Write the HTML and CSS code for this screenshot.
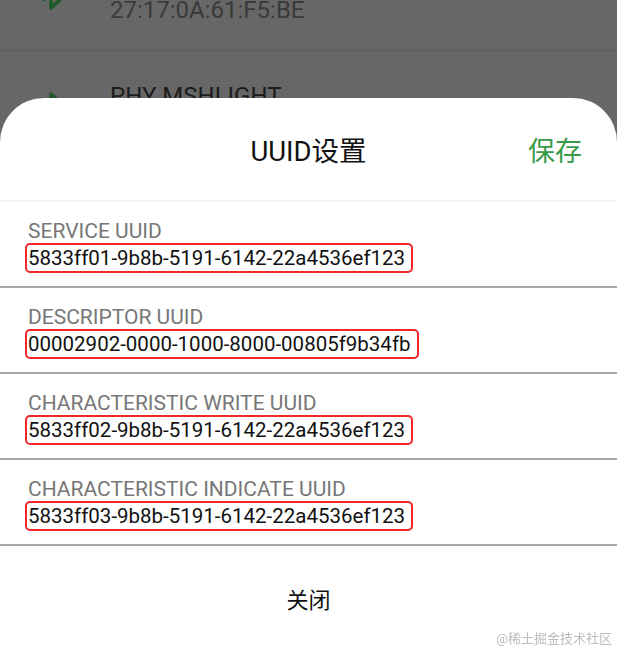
FILE: index.html
```html
<!DOCTYPE html>
<html>
<head>
  <meta charset="utf-8">
  <title>UUID设置</title>
  <link rel="stylesheet" href="styles.css">
</head>
<body>
  <!-- device list behind the sheet -->
  <div class="device-list">
    <div class="device">
      <svg class="bt-icon" viewBox="0 0 24 24"><path d="M6.5 7l11 10-5.5 5V2l5.5 5-11 10"/></svg>
      <div class="device-info">
        <div class="device-name">PHY LIGHT</div>
        <div class="device-mac">27:17:0A:61:F5:BE</div>
      </div>
    </div>
    <div class="device">
      <svg class="bt-icon" viewBox="0 0 24 24"><path d="M6.5 7l11 10-5.5 5V2l5.5 5-11 10"/></svg>
      <div class="device-info">
        <div class="device-name">PHY MSHLIGHT</div>
        <div class="device-mac">27:17:0A:61:F5:C0</div>
      </div>
    </div>
  </div>

  <div class="sheet">
    <div class="sheet-header">
      <span></span>
      <span class="sheet-title">UUID设置</span>
      <button class="save-btn">保存</button>
    </div>
    <div class="uuid-row">
      <div class="uuid-label">SERVICE UUID</div>
      <div class="uuid-value">5833ff01-9b8b-5191-6142-22a4536ef123</div>
    </div>
    <div class="uuid-row">
      <div class="uuid-label">DESCRIPTOR UUID</div>
      <div class="uuid-value">00002902-0000-1000-8000-00805f9b34fb</div>
    </div>
    <div class="uuid-row">
      <div class="uuid-label">CHARACTERISTIC WRITE UUID</div>
      <div class="uuid-value">5833ff02-9b8b-5191-6142-22a4536ef123</div>
    </div>
    <div class="uuid-row">
      <div class="uuid-label">CHARACTERISTIC INDICATE UUID</div>
      <div class="uuid-value">5833ff03-9b8b-5191-6142-22a4536ef123</div>
    </div>
    <button class="close-btn">关闭</button>
  </div>

  <div class="watermark">@稀土掘金技术社区</div>
</body>
</html>
```

FILE: styles.css
```css
/* Bottom sheet for editing the BLE UUIDs */
body {
  margin: 0;
  background-color: #676767;
  font-family: Roboto, "Noto Sans CJK SC", sans-serif;
  overflow: hidden;
}

/* dimmed device list */
.device-list {
  margin-top: -65px;
}

.device {
  display: flex;
  border-bottom: 1px solid #5c5c5c;
}

.bt-icon {
  width: 36px;
  height: 36px;
  margin: 40px 0 0 33px;
  fill: none;
  stroke: #1d5a28;
  stroke-width: 2.4;
  stroke-linejoin: round;
  flex-shrink: 0;
}

.device-info {
  padding: 30px 0 25px 41px;
  font-size: 24px;
  line-height: 30px;
}

.device-name {
  color: #1c1c1c;
}

.device-mac {
  color: #3a3a3a;
}

/* sheet */
.sheet {
  position: fixed;
  top: 98px;
  left: 0;
  right: 0;
  bottom: 0;
  background-color: #fff;
  border-radius: 44px 44px 0 0;
  display: flex;
  flex-direction: column;
}

.sheet-header {
  height: 102px;
  display: grid;
  grid-template-columns: 1fr auto 1fr;
  align-items: center;
  padding: 0 35px;
  border-bottom: 2px solid #f2f2f2;
}

.sheet-title {
  font-size: 27.5px;
  color: #111;
}

.save-btn {
  justify-self: end;
  padding: 0;
  border: none;
  background: none;
  font-family: inherit;
  font-size: 27px;
  color: #3a9b4b;
}

.uuid-row {
  padding: 18px 0 13px 25px;
  border-bottom: 2px solid #a6a6a6;
}

.uuid-label {
  margin: 0 0 1px 3px;
  font-size: 21px;
  line-height: 22px;
  color: #777;
}

.uuid-value {
  display: inline-block;
  height: 26px;
  padding: 0 6px 0 1px;
  border: 2px solid #f02828;
  border-radius: 5px;
  font-size: 20.5px;
  line-height: 27px;
  color: #111;
}

.close-btn {
  flex: 1;
  border: none;
  background: none;
  font-family: inherit;
  font-size: 22px;
  color: #111;
}

.watermark {
  position: fixed;
  right: 5px;
  bottom: 3px;
  font-size: 13px;
  color: #bdbdbd;
}
```
